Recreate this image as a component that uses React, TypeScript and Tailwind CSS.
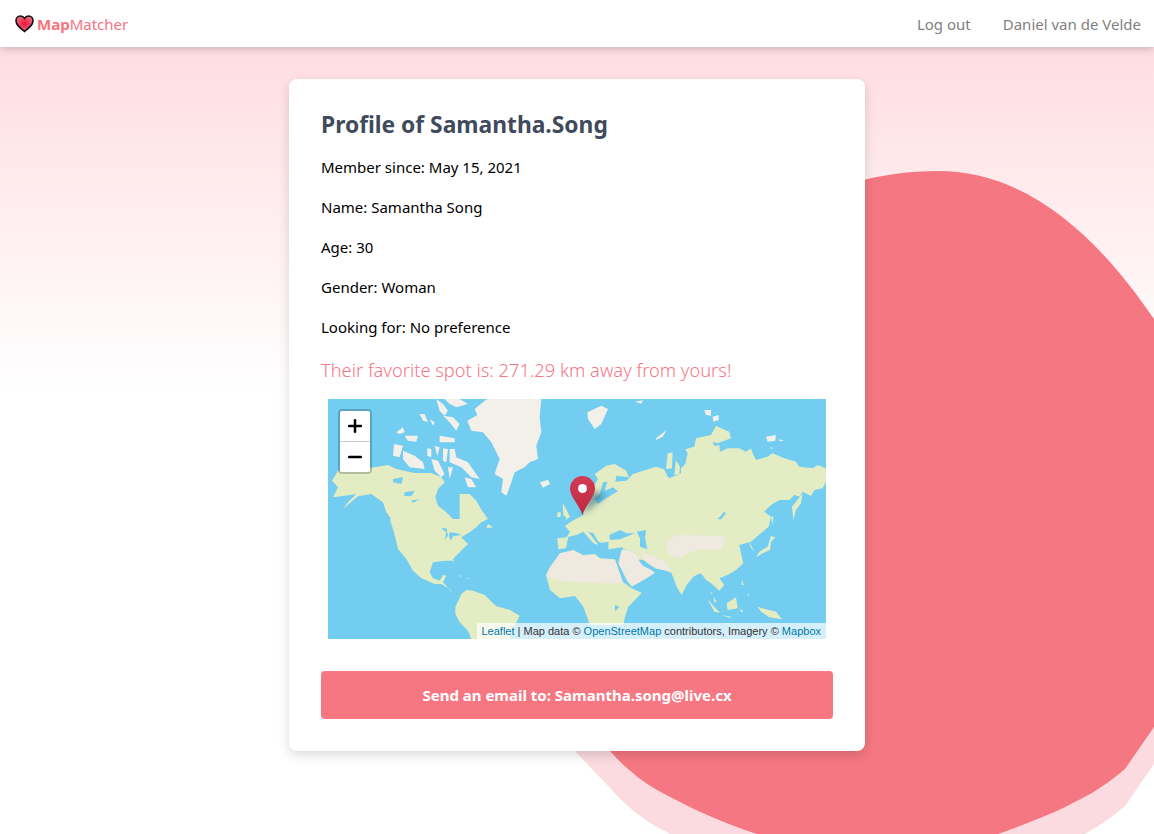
import { Plus, Minus } from "lucide-react";

// every shape group below is traced at 3x, so each one gets its own translate + scale(1/3)
const GREEN = "#e3ecc2";
const SAND = "#efe9e0";
const ICE = "#f3f0ea";
const SEA = "#72cdf1";

type Shape = [string, string];

const northAmericaTop: Shape[] = [
	[GREEN, "12,245 30,215 60,212 120,208 180,198 205,210 260,222 310,222 340,235 350,250 330,270 322,295 330,320 355,340 375,360 387,366 395,360 395,285 425,285 445,305 462,335 480,360 190,360 175,340 165,310 130,285 90,292 45,330 60,310 85,285 50,290 15,295 30,265"],
	[SEA, "195,240 225,235 220,255 195,250"],
	[SEA, "230,280 260,275 250,292 228,290"],
	[SEA, "250,305 275,300 255,312"],
	[ICE, "325,0 345,15 360,35 350,50 335,35"],
	[ICE, "350,0 395,0 420,15 385,25 365,15"],
	[ICE, "275,45 290,45 300,70 285,65"],
	[ICE, "205,100 225,85 230,100 215,105"],
	[ICE, "230,110 270,110 265,128 240,125"],
	[ICE, "305,60 320,70 315,80"],
	[ICE, "345,50 375,55 395,75 385,95 365,70"],
	[ICE, "335,110 380,118 380,130 335,130"],
	[ICE, "198,135 225,140 215,175 195,170"],
	[ICE, "225,155 260,170 285,190 290,210 245,205 225,180"],
	[ICE, "298,148 310,150 310,175 298,170"],
	[ICE, "320,140 335,145 328,170"],
	[ICE, "345,148 360,150 355,190 345,185"],
	[ICE, "365,150 380,150 385,175 420,190 455,240 430,235 400,205 365,190"],
	[ICE, "310,180 330,185 350,225 340,235 320,215"],
	[ICE, "360,205 375,205 365,240"],
	[ICE, "410,235 430,240 445,265 420,265"],
	[ICE, "418,65 448,48 440,30 470,5 478,0 640,0 635,55 640,100 625,140 630,180 605,190 590,205 560,220 545,265 535,290 520,280 525,240 500,225 515,180 490,130 465,100 430,95"],
	[ICE, "636,250 660,242 666,255 645,266"],
];

const northAmericaBottom: Shape[] = [
	[GREEN, "35,0 330,0 310,10 295,25 275,40 250,55 255,60 270,75 245,100 225,120 232,142 225,125 200,125 165,130 155,160 165,178 185,185 195,168 205,170 195,190 205,200 225,225 215,210 190,195 170,195 130,178 105,155 85,120 60,90 48,40"],
	[GREEN, "330,15 345,25 325,28"],
	[SEA, "190,28 205,28 210,50 200,62 205,40"],
	[SEA, "215,40 235,42 250,48 225,52 218,65 213,50"],
	[GREEN, "268,177 280,179 268,180"],
	[GREEN, "245,168 250,170 248,176"],
	[GREEN, "232,265 250,225 265,213 285,215 320,228 355,262 395,272 425,290 410,320 395,345 395,360 280,360 270,335 245,310 232,285"],
];

const scandinavia: Shape[] = [
	[GREEN, "15,345 30,295 48,262 60,240 50,225 85,200 110,195 145,215 152,235 115,230 112,248 145,245 165,225 234,203 240,345"],
	[SEA, "75,250 88,248 80,275 105,265 130,285 100,300 60,315 50,300 65,285"],
	[ICE, "28,40 70,20 90,30 70,75 50,90 30,60"],
	[ICE, "170,8 195,4 190,14"],
];

const southernEurasia: Shape[] = [
	[GREEN, "510,0 510,270 495,255 480,250 460,260 440,285 425,315 410,290 395,250 375,240 345,235 330,225 310,210 295,208 290,190 260,178 250,178 248,172 205,178 205,155 185,158 175,155 160,130 145,125 175,165 160,160 130,125 110,135 85,140 78,175 55,178 52,145 80,142 90,125 75,108 92,95 125,78 150,60 190,30 240,0"],
	[SEA, "208,135 240,120 260,130 285,130 240,148 210,150"],
	[SEA, "290,125 318,120 315,145 322,178 300,170 300,145"],
	[GREEN, "68,40 75,50 90,80 75,92 80,85 70,75"],
	[GREEN, "52,68 62,65 62,80 52,82"],
	[GREEN, "18,255 30,230 60,190 100,180 130,195 165,192 180,205 225,208 248,275 275,295 305,308 290,325 265,350 255,380 250,405 150,405 130,350 105,318 60,325 30,300"],
	[SAND, "18,258 35,228 60,190 100,182 130,197 165,195 180,207 225,210 250,280 170,280 60,272"],
	[SAND, "245,180 262,178 290,190 300,215 345,248 315,268 275,290 260,270 235,220"],
	[SEA, "295,210 310,215 335,240 310,228"],
	[SAND, "310,190 350,200 385,230 345,232 310,208"],
	[SEA, "225,345 238,350 225,365"],
];

const eastAsia: Shape[] = [
	[GREEN, "0,170 25,178 35,200 55,195 65,170 60,140 88,160 95,130 88,118 115,110 120,85 165,75 180,47 195,55 220,65 225,85 185,100 170,95 175,108 190,105 192,125 215,115 250,115 270,125 285,115 290,130 300,150 335,140 350,130 385,145 420,155 430,170 470,175 485,165 510,175 510,215 500,235 475,240 465,258 440,245 430,260 415,255 400,270 370,270 345,285 325,305 345,320 338,350 320,365 285,395 250,405 255,430 262,460 240,480 215,495 190,505 205,525 190,542 165,520 150,510 135,490 95,495 75,550 55,505 45,485 0,475"],
	[SEA, "25,178 28,140 40,125 56,128 60,140 90,160 75,175 75,190 40,205"],
	[GREEN, "30,178 35,130 50,127 48,175"],
	[GREEN, "55,195 60,150 72,170 70,192"],
	[SEA, "185,328 205,305 210,310 195,328"],
	[SAND, "30,400 60,375 210,378 195,420 130,418 65,445 35,430"],
	[SAND, "0,445 30,455 45,485 0,475"],
	[GREEN, "408,290 440,250 435,280 420,300 412,330"],
	[GREEN, "345,320 352,320 350,345"],
	[GREEN, "345,378 358,382 345,395 342,420 320,430 300,442 310,425 335,410"],
	[GREEN, "280,395 295,425 283,410"],
	[GREEN, "258,510 263,525 256,525"],
	[GREEN, "275,553 279,553 278,560"],
	[GREEN, "155,568 175,590 192,608 175,605"],
	[GREEN, "212,580 240,562 245,595 215,600"],
	[GREEN, "165,545 169,547 168,555"],
	[GREEN, "172,560 182,575 175,578"],
	[GREEN, "195,615 225,620 222,624"],
	[GREEN, "305,590 330,598 360,605 378,628 340,622 315,605"],
	[GREEN, "253,595 262,605 255,607"],
	[ICE, "0,85 32,60 20,80 0,90"],
	[ICE, "145,0 165,0 165,17 150,15"],
	[ICE, "170,20 188,15 188,30 172,35"],
	[ICE, "330,80 360,75 358,92 335,95"],
	[ICE, "370,88 385,92 370,93"],
	[ICE, "342,112 350,113 348,118"],
];

function Shapes({ items, x, y }: { items: Shape[]; x: number; y: number }) {
	return (
		<g transform={`translate(${x} ${y}) scale(0.3333)`}>
			{items.map(([fill, points]) => (
				<polygon key={points} points={points} fill={fill} />
			))}
		</g>
	);
}

function HeartLogo() {
	return (
		<svg width="19" height="18" viewBox="0 0 19 18">
			<defs>
				<radialGradient id="heartFill" cx="50%" cy="50%" r="55%">
					<stop offset="0%" stopColor="#f5113c" />
					<stop offset="100%" stopColor="#e8717f" />
				</radialGradient>
			</defs>
			<path
				d="M9.5 16.5 C5 13 1 10 1 5.8 C1 3 3 1 5.4 1 C7.2 1 8.7 2 9.5 3.4 C10.3 2 11.8 1 13.6 1 C16 1 18 3 18 5.8 C18 10 14 13 9.5 16.5 Z"
				fill="url(#heartFill)"
				stroke="#111"
				strokeWidth="1.6"
			/>
		</svg>
	);
}

function WorldMap() {
	return (
		<svg className="absolute inset-0" width="498" height="240" viewBox="0 0 498 240">
			<defs>
				<filter id="pinShadow" x="-50%" y="-50%" width="200%" height="200%">
					<feGaussianBlur stdDeviation="3" />
				</filter>
				<linearGradient id="pinFill" x1="0" y1="0" x2="0" y2="1">
					<stop offset="0%" stopColor="#d33a55" />
					<stop offset="100%" stopColor="#bf2a42" />
				</linearGradient>
			</defs>
			<Shapes items={scandinavia} x={250} y={0} />
			<Shapes items={southernEurasia} x={212} y={91} />
			<Shapes items={eastAsia} x={328} y={11} />
			<Shapes items={northAmericaTop} x={0} y={0} />
			<Shapes items={northAmericaBottom} x={50} y={120} />
			<polygon points="254,116 264,92 278,96" fill="#1f5f7a" opacity="0.6" filter="url(#pinShadow)" />
			<path
				d="M254.5 116 C252 107 242 98 242 89.5 C242 82.5 247.5 77 254.5 77 C261.5 77 267 82.5 267 89.5 C267 98 257 107 254.5 116 Z"
				fill="url(#pinFill)"
			/>
			<circle cx="254.5" cy="89.5" r="4.5" fill="#fff" />
		</svg>
	);
}

function MapBox() {
	return (
		<div className="relative mx-[7px] h-[240px] w-[498px] overflow-hidden bg-[#72cdf1]">
			<WorldMap />
			<div className="absolute top-[10px] left-[10px] rounded-[4px] border-2 border-black/20 bg-clip-padding">
				<div className="flex h-[31px] w-[30px] items-center justify-center rounded-t-[2px] border-b border-[#ccc] bg-white text-black">
					<Plus size={20} strokeWidth={3} />
				</div>
				<div className="flex h-[30px] w-[30px] items-center justify-center rounded-b-[2px] bg-white text-black">
					<Minus size={20} strokeWidth={3} />
				</div>
			</div>
			<div className="absolute right-0 bottom-0 bg-white/70 px-[5px] font-['Liberation_Sans',sans-serif] text-[11px] leading-[16px] text-[#333]">
				<span className="text-[#0078a8]">Leaflet</span> | Map data ©{" "}
				<span className="text-[#0078a8]">OpenStreetMap</span> contributors, Imagery ©{" "}
				<span className="text-[#0078a8]">Mapbox</span>
			</div>
		</div>
	);
}

export default function App() {
	return (
		<div className="relative h-[834px] overflow-hidden bg-white font-['Noto_Sans',sans-serif] text-[15px] leading-6 text-black">
			<div className="absolute inset-x-0 top-[47px] h-[345px] bg-gradient-to-b from-[#ffdde1] to-white"></div>
			<svg className="absolute inset-0" width="1154" height="834" viewBox="0 0 1154 834">
				<path
					d="M700 337 C760 237 860 208 938 208 C1030 208 1100 277 1154 356 L1200 437 L1200 687 L1154 764 L1125 806 C1100 827 1085 834 1065 844 C1045 854 1020 863 998 871 C920 897 830 897 757 871 C720 859 690 845 657 827 C640 817 625 805 610 788 L575 751 L500 637 Z"
					fill="#fbdbdf"
				/>
				<path
					d="M700 300 C760 200 860 171 938 171 C1030 171 1100 240 1154 319 L1200 400 L1200 650 L1154 727 L1125 769 C1100 790 1085 797 1065 807 C1045 817 1020 826 998 834 C920 860 830 860 757 834 C720 822 690 808 657 790 C640 780 625 768 610 751 L575 714 L500 600 Z"
					fill="#f57782"
				/>
			</svg>

			<nav className="relative flex h-[47px] items-center justify-between bg-white pr-[13px] pl-[15px] shadow-[0_2px_8px_rgba(0,0,0,0.2)]">
				<div className="flex items-center gap-[3px] text-[#f8737f]">
					<HeartLogo />
					<span>
						<b>Map</b>Matcher
					</span>
				</div>
				<div className="flex gap-[32px] text-[#7f7f7f]">
					<span>Log out</span>
					<span>Daniel van de Velde</span>
				</div>
			</nav>

			<main className="relative mx-auto mt-[32px] w-[576px] rounded-lg bg-white p-[32px] shadow-[0_4px_12px_rgba(0,0,0,0.15)]">
				<h1 className="mb-[16px] text-[22.8px] leading-[28px] font-bold text-[#3f4a5c]">Profile of Samantha.Song</h1>
				<div className="flex flex-col gap-4">
					<p>Member since: May 15, 2021</p>
					<p>Name: Samantha Song</p>
					<p>Age: 30</p>
					<p>Gender: Woman</p>
					<p>Looking for: No preference</p>
				</div>
				<p className="mt-[17px] mb-[15px] text-[18.3px] leading-[28px] font-light text-[#f57786]">
					Their favorite spot is: 271.29 km away from yours!
				</p>
				<MapBox />
				<div className="mt-[32px] flex h-[48px] items-center justify-center rounded bg-[#f67782] font-bold text-white">
					Send an email to: Samantha.song@live.cx
				</div>
			</main>
		</div>
	);
}
